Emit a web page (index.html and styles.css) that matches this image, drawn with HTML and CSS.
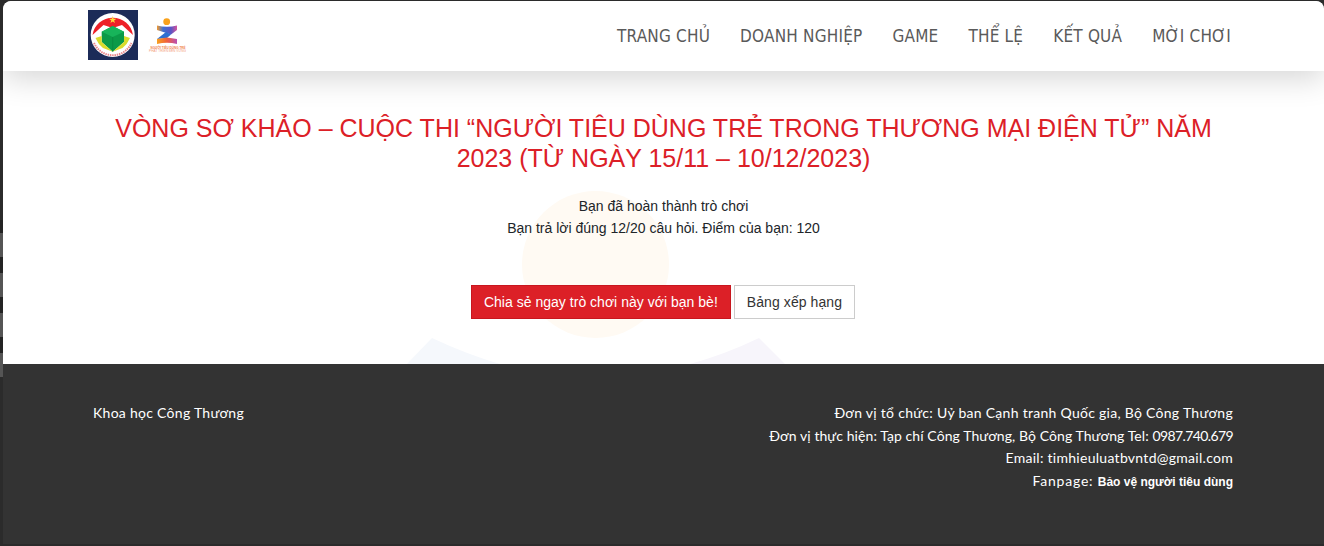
FILE: index.html
```html
<!DOCTYPE html>
<html lang="vi">
<head>
<meta charset="utf-8">
<title>Vòng sơ khảo</title>
<link rel="stylesheet" href="styles.css">
</head>
<body>
<div class="strip"></div>
<div class="page">
  <header class="header">
    <div class="logos">
      <svg class="logo-a" width="50" height="50" viewBox="0 0 50 50">
        <rect width="50" height="50" fill="#1c2b58"/>
        <circle cx="24.700" cy="25" r="22" fill="#fff"/>
        <path d="M4.500 25A20.500 20.500 0 0 1 45 25L34 15 24.700 18 15.500 15Z" fill="#ee2028"/>
        <path d="M24.700 6l.9 2.700h2.800l-2.300 1.700.9 2.700-2.300-1.700-2.300 1.700.9-2.700-2.300-1.700h2.800z" fill="#ffd83a"/>
        <path d="M24.700 16L36 21.700V32L24.700 41.700 13.700 32V21.700Z" fill="#0b9a48"/>
        <path d="M24.700 16L36 21.700 24.700 27 13.700 21.700Z" fill="#17b45a"/>
        <path d="M24.700 27V41.700" stroke="#0a7f3c" stroke-width=".6"/>
        <path d="M7.500 28L13.700 26V32L24.700 41.700 15 38Q10 34 7.500 28Z M42 28L36 26V32L24.700 41.700 34.500 38Q39.500 34 42 28Z" fill="#d9dc2c"/>
        <path d="M6 33A20.500 20.500 0 0 0 43.500 33" fill="none" stroke="#e9868a" stroke-width="2" stroke-dasharray="1.500 .8"/>
      </svg>
      <svg class="logo-b" width="40" height="40" viewBox="0 0 40 40">
        <defs>
          <linearGradient id="zt" x1="0" y1="0" x2="1" y2="0">
            <stop offset="0" stop-color="#f59a2e"/>
            <stop offset=".3" stop-color="#3f6fd0"/>
            <stop offset=".7" stop-color="#5a55c4"/>
            <stop offset="1" stop-color="#d5559c"/>
          </linearGradient>
          <linearGradient id="zb" x1="0" y1="0" x2="1" y2="0">
            <stop offset="0" stop-color="#f7a11f"/>
            <stop offset=".5" stop-color="#f0603c"/>
            <stop offset="1" stop-color="#b94fb5"/>
          </linearGradient>
        </defs>
        <circle cx="18.700" cy="6.700" r="3.400" fill="#f9a11b"/>
        <path d="M9 10.500Q19 13 29 10.500V15L23 19.500 9 15Z" fill="url(#zt)"/>
        <path d="M23 19.500L19 23 9 24 18 17Z" fill="#2f6fd0"/>
        <path d="M9 24L19 22.500 29 24V29Q19 26.500 9 29Z" fill="url(#zb)"/>
        <text class="tiny" x="2.500" y="34" textLength="35" lengthAdjust="spacingAndGlyphs">NGƯỜI TIÊU DÙNG TRẺ</text>
        <text class="tiny tiny-light" x="1" y="37" textLength="37" lengthAdjust="spacingAndGlyphs">PHÁT TRIỂN BỀN VỮNG</text>
      </svg>
    </div>
    <nav class="nav">
      <a class="nav-link">TRANG CHỦ</a>
      <a class="nav-link">DOANH NGHIỆP</a>
      <a class="nav-link">GAME</a>
      <a class="nav-link">THỂ LỆ</a>
      <a class="nav-link">KẾT QUẢ</a>
      <a class="nav-link">MỜI CHƠI</a>
    </nav>
  </header>
  <main class="main">
    <svg class="watermark" width="400" height="175" viewBox="0 0 400 175">
      <circle cx="189.500" cy="75.500" r="73.500" fill="#fffaf3"/>
      <path d="M1 175L26 149Q60 165 94 175Z" fill="#f5f8fc"/>
      <path d="M284 175Q320 165 353 149L379 175Z" fill="#f7f5fb"/>
    </svg>
    <h1 class="title">VÒNG SƠ KHẢO – CUỘC THI “NGƯỜI TIÊU DÙNG TRẺ TRONG THƯƠNG MẠI ĐIỆN TỬ” NĂM 2023 (TỪ NGÀY 15/11 – 10/12/2023)</h1>
    <p class="line">Bạn đã hoàn thành trò chơi</p>
    <p class="line">Bạn trả lời đúng 12/20 câu hỏi. Điểm của bạn: 120</p>
    <div class="actions">
      <a class="btn btn-red">Chia sẻ ngay trò chơi này với bạn bè!</a>
      <a class="btn btn-light">Bảng xếp hạng</a>
    </div>
  </main>
  <footer class="footer">
    <div class="foot-left">Khoa học Công Thương</div>
    <div class="foot-right">
      <div>Đơn vị tổ chức: Uỷ ban Cạnh tranh Quốc gia, Bộ Công Thương</div>
      <div class="tight">Đơn vị thực hiện: Tạp chí Công Thương, Bộ Công Thương Tel: <span class="tel">0987.740.679</span></div>
      <div>Email: timhieuluatbvntd@gmail.com</div>
      <div><span class="fan-label">Fanpage: </span><b class="fan">Bảo vệ người tiêu dùng</b></div>
    </div>
  </footer>
</div>
</body>
</html>
```
FILE: styles.css
```css
html, body { margin: 0; padding: 0; height: 546px; overflow: hidden; background: #2b2b2b; }
.strip { position: absolute; left: 0; top: 220px; width: 3px; height: 157px; background: repeating-linear-gradient(to bottom, #232323 0, #232323 13px, #555 13px, #555 37px, #232323 37px, #232323 53px); background-size: 100% 40px; }
.page { margin: 1px 0 0 3px; background: #fff; border-radius: 8px 8px 0 0; overflow: hidden; }
.header { height: 70px; display: flex; align-items: center; justify-content: space-between; padding: 0 93px 0 85px; background: #fff; box-shadow: 0 8px 30px rgba(0,0,0,.16); position: relative; z-index: 2; border-radius: 8px 8px 0 0; }
.logos { display: flex; align-items: center; gap: 10px; margin-bottom: 2px; }
.logo-a, .logo-b { display: block; overflow: visible; }
.tiny { font: 700 3px "Liberation Sans", Arial, sans-serif; fill: #ef7f4d; }
.tiny-light { font-weight: 400; fill: #f4a283; }
.nav { display: flex; gap: 30px; }
.nav-link { font: 17px/24px "DejaVu Sans Condensed", "Open Sans", sans-serif; color: #5a5a5a; letter-spacing: .2px; }
.main { position: relative; height: 293px; padding: 42px 85px 0; box-sizing: border-box; text-align: center; font: 14px/22px "Liberation Sans", Arial, sans-serif; color: #212529; }
.watermark { position: absolute; left: 403px; top: 118px; }
.title { position: relative; margin: 0 0 22px; font: 400 25px/30px "Liberation Sans", Arial, sans-serif; color: #dc2027; }
.line { position: relative; margin: 0; }
.actions { position: relative; margin-top: 46px; padding-right: 1px; display: flex; justify-content: center; gap: 3px; }
.btn { font: 14px/20px "Liberation Sans", Arial, sans-serif; padding: 6px 12px; border: 1px solid; }
.btn-red { background: #dc2027; border-color: #c8161e; color: #fff; letter-spacing: .02px; }
.btn-light { background: #fff; border-color: #ccc; color: #333; letter-spacing: .08px; }
.footer { height: 180px; display: flex; justify-content: space-between; background: #333; color: #fff; padding: 38px 91px 0 90px; box-sizing: border-box; font: 14px/22.700px "Lato", sans-serif; letter-spacing: .28px; }
.foot-right { text-align: right; }
.tight { letter-spacing: .08px; }
.tel { letter-spacing: -.6px; }
.fan-label { letter-spacing: .8px; }
.fan { font: 700 12px/22.700px "Liberation Sans", Arial, sans-serif; letter-spacing: 0; }
```
